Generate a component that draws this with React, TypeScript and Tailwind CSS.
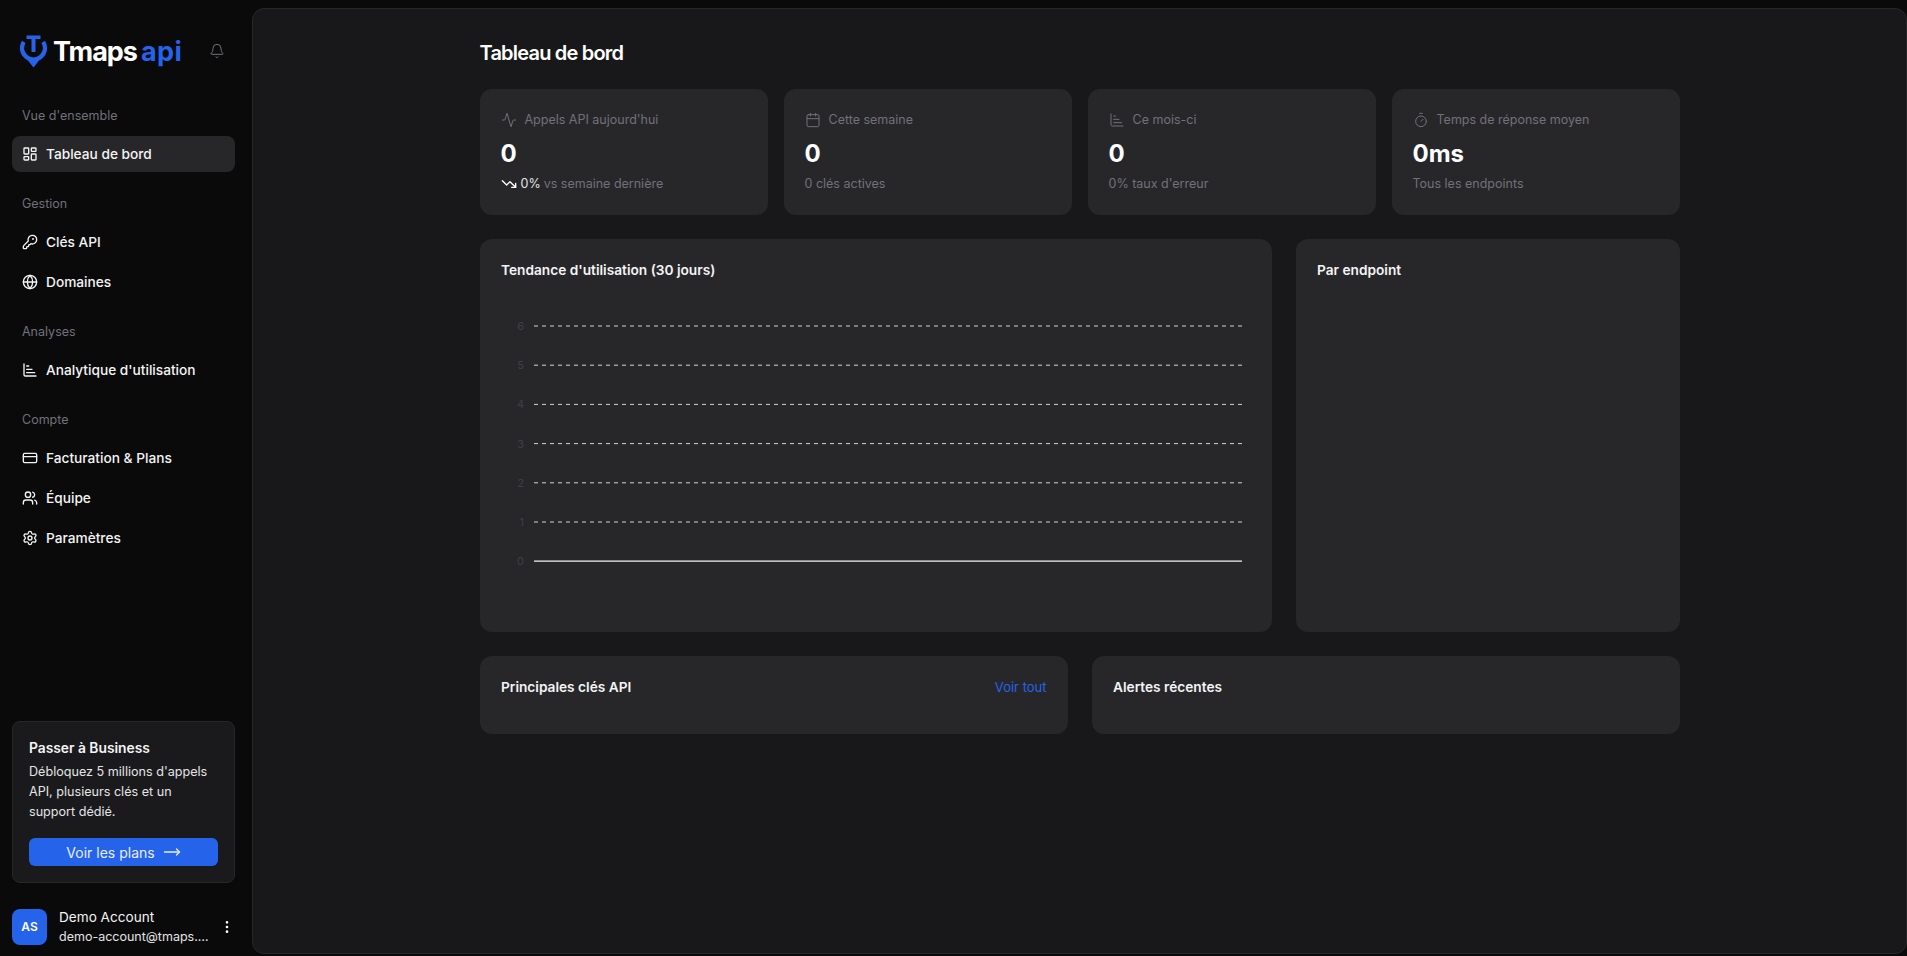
import {
  Activity,
  Bell,
  Calendar,
  ChartBarIncreasing,
  CreditCard,
  EllipsisVertical,
  Globe,
  KeyRound,
  LayoutDashboard,
  MoveRight,
  Settings,
  Timer,
  TrendingDown,
  Users,
} from "lucide-react";
import type { ComponentType, ReactNode } from "react";

type IconType = ComponentType<{ className?: string; strokeWidth?: number }>;

const navGroups: { label: string; items: { label: string; icon: IconType; active?: boolean }[] }[] = [
  { label: "Vue d'ensemble", items: [{ label: "Tableau de bord", icon: LayoutDashboard, active: true }] },
  {
    label: "Gestion",
    items: [
      { label: "Clés API", icon: KeyRound },
      { label: "Domaines", icon: Globe },
    ],
  },
  { label: "Analyses", items: [{ label: "Analytique d'utilisation", icon: ChartBarIncreasing }] },
  {
    label: "Compte",
    items: [
      { label: "Facturation & Plans", icon: CreditCard },
      { label: "Équipe", icon: Users },
      { label: "Paramètres", icon: Settings },
    ],
  },
];

function Logo() {
  return (
    <div className="flex items-center">
      <svg width="28" height="34" viewBox="0 0 28 34" className="shrink-0" fill="#2563eb">
        <path d="M3.8 7.8A11.5 11.5 0 1 0 23.2 7.8" fill="none" stroke="#2563eb" strokeWidth="4.2" />
        <path d="M6 24h15l-7.5 9.5z" />
        <path d="M6.5 1.5h14V5h-5v13h-4V5h-5z" />
      </svg>
      <span className="ml-[5px] text-[27px] leading-none font-bold tracking-[-1px] text-white">Tmaps</span>
      <span className="ml-[4px] text-[27px] leading-none font-bold tracking-[0.4px] text-[#2563eb]">api</span>
    </div>
  );
}

function Sidebar() {
  return (
    <aside className="flex h-full w-[252px] shrink-0 flex-col">
      <div className="flex h-[68px] items-center justify-between pt-[34px] pr-[27px] pl-[20px]">
        <Logo />
        <Bell className="h-[16px] w-[16px] text-[#71717a]" strokeWidth={1.5} />
      </div>
      <nav className="mt-[30px] flex flex-col gap-[14px] pr-[17px] pl-3">
        {navGroups.map((group) => (
          <div key={group.label}>
            <div className="mb-[2px] flex h-[36px] items-center px-[10px] text-[12.5px] text-[#71717a]">
              {group.label}
            </div>
            <div className="flex flex-col gap-1">
              {group.items.map((item) => {
                const Icon = item.icon;
                return (
                  <div
                    key={item.label}
                    className={`flex h-[36px] items-center gap-2 rounded-lg px-[10px] text-[13.7px] font-medium text-[#f4f4f5] ${
                      item.active ? "bg-[#27272a]" : ""
                    }`}
                  >
                    <Icon className="h-[16px] w-[16px] shrink-0" strokeWidth={2} />
                    {item.label}
                  </div>
                );
              })}
            </div>
          </div>
        ))}
      </nav>
      <div className="mt-auto pr-[17px] pb-[10px] pl-3">
        <div className="rounded-lg border border-[#27272a] bg-[#1a1a1c] p-4">
          <div className="text-[13.8px] leading-[20px] font-semibold text-[#f4f4f5]">Passer à Business</div>
          <p className="mt-[4px] text-[12.6px] leading-[20px] text-[#e4e4e7]">
            Débloquez 5 millions d'appels API, plusieurs clés et un support dédié.
          </p>
          <button className="mt-[16px] flex h-[28px] w-full items-center justify-center gap-2 rounded-md bg-[#2563eb] text-[14px] text-[#e8eefc]">
            Voir les plans
            <MoveRight className="h-[18px] w-[18px]" strokeWidth={1.75} />
          </button>
        </div>
        <div className="mt-[25px] flex items-center">
          <div className="flex h-[36px] w-[35px] shrink-0 items-center justify-center rounded-lg bg-[#2563eb] text-[12px] font-semibold text-white">
            AS
          </div>
          <div className="ml-[12px] min-w-0 flex-1">
            <div className="text-[13.6px] leading-[19px] text-[#f4f4f5]">Demo Account</div>
            <div className="truncate text-[12.5px] leading-[19px] text-[#e4e4e7]">demo-account@tmaps.com</div>
          </div>
          <EllipsisVertical className="ml-[10px] h-[16px] w-[16px] shrink-0 text-white" strokeWidth={2} />
        </div>
      </div>
    </aside>
  );
}

function StatCard({
  icon: Icon,
  title,
  value,
  sub,
}: {
  icon: IconType;
  title: string;
  value: string;
  sub: ReactNode;
}) {
  return (
    <div className="h-[126px] rounded-xl bg-[#27272a] px-[21px] pt-[21px]">
      <div className="flex h-[20px] items-center gap-2 text-[12.5px] text-[#71717a]">
        <Icon className="h-[16px] w-[16px]" strokeWidth={1.5} />
        {title}
      </div>
      <div className="mt-[8px] text-[24px] leading-[32px] font-bold text-white">{value}</div>
      <div className="mt-[4px] flex h-[20px] items-center text-[12.5px] text-[#71717a]">{sub}</div>
    </div>
  );
}

function UsageChart() {
  const ticks = [6, 5, 4, 3, 2, 1];
  const step = 39.2;
  return (
    <svg width="750" height="262" viewBox="0 0 750 262" className="mt-[38px] -ml-[1.5px] block">
      {ticks.map((t, i) => (
        <g key={t}>
          <text x="24" y={8 + i * step + 4} textAnchor="end" fontSize="11" fill="#3f3f46">
            {t}
          </text>
          <line x1="34" x2="742" y1={8 + i * step} y2={8 + i * step} stroke="#d4d4d8" strokeDasharray="4 4" />
        </g>
      ))}
      <text x="24" y={8 + 6 * step + 4} textAnchor="end" fontSize="11" fill="#3f3f46">
        0
      </text>
      <line x1="34" x2="742" y1={8 + 6 * step} y2={8 + 6 * step} stroke="#f4f4f5" strokeWidth="1.2" />
    </svg>
  );
}

export default function App() {
  return (
    <div className="flex h-screen overflow-hidden bg-[#0a0a0b] font-['Inter',sans-serif]">
      <Sidebar />
      <main className="mt-2 mb-[2px] min-w-0 flex-1 rounded-xl border border-[#27272a] bg-[#18181a]">
        <div className="mx-auto w-[1200px] pt-[32px]">
          <h1 className="h-[24px] text-[20px] leading-[24px] font-semibold tracking-[-0.8px] text-white">
            Tableau de bord
          </h1>
          <div className="mt-[24px] grid grid-cols-4 gap-4">
            <StatCard
              icon={Activity}
              title="Appels API aujourd'hui"
              value="0"
              sub={
                <>
                  <TrendingDown className="mr-[4px] h-[16px] w-[16px] text-white" strokeWidth={2} />
                  <span className="mr-[3px] text-[#e4e4e7]">0%</span> vs semaine dernière
                </>
              }
            />
            <StatCard icon={Calendar} title="Cette semaine" value="0" sub="0 clés actives" />
            <StatCard icon={ChartBarIncreasing} title="Ce mois-ci" value="0" sub="0% taux d'erreur" />
            <StatCard icon={Timer} title="Temps de réponse moyen" value="0ms" sub="Tous les endpoints" />
          </div>
          <div className="mt-[24px] grid grid-cols-[792px_384px] gap-6">
            <div className="h-[393px] rounded-xl bg-[#27272a] pt-[21px] pl-[21.5px]">
              <h2 className="text-[13.7px] leading-[20px] font-semibold text-[#f4f4f5]">
                Tendance d'utilisation (30 jours)
              </h2>
              <UsageChart />
            </div>
            <div className="h-[393px] rounded-xl bg-[#27272a] pt-[21px] pl-[21.5px]">
              <h2 className="text-[13.7px] leading-[20px] font-semibold text-[#f4f4f5]">Par endpoint</h2>
            </div>
          </div>
          <div className="mt-[24px] grid grid-cols-2 gap-6">
            <div className="flex h-[78px] items-start justify-between rounded-xl bg-[#27272a] pt-[21px] pr-[21px] pl-[21.5px]">
              <h2 className="text-[13.7px] leading-[20px] font-semibold text-[#f4f4f5]">Principales clés API</h2>
              <span className="text-[13px] leading-[20px] text-[#2563eb]">Voir tout</span>
            </div>
            <div className="h-[78px] rounded-xl bg-[#27272a] pt-[21px] pl-[21.5px]">
              <h2 className="text-[13.7px] leading-[20px] font-semibold text-[#f4f4f5]">Alertes récentes</h2>
            </div>
          </div>
        </div>
      </main>
    </div>
  );
}
